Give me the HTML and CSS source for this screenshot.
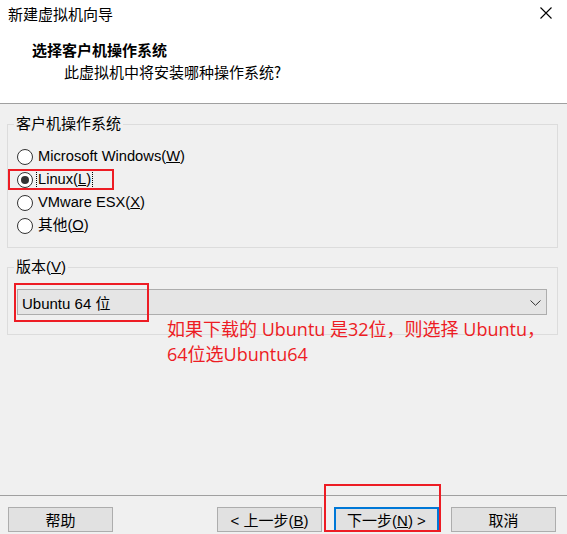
FILE: index.html
```html
<!DOCTYPE html>
<html lang="zh-CN">
<head>
<meta charset="utf-8">
<title>新建虚拟机向导</title>
<link rel="stylesheet" href="styles.css">
</head>
<body>
<div class="page">
  <div class="header">
    <div class="titlebar">
      <span class="title">新建虚拟机向导</span>
      <svg class="close" width="12" height="12" viewBox="0 0 12 12"><path d="M0.5 0.5 L11.5 11.5 M11.5 0.5 L0.5 11.5" stroke="#000" stroke-width="1.1" fill="none"/></svg>
    </div>
    <div class="heading">选择客户机操作系统</div>
    <div class="subtitle">此虚拟机中将安装哪种操作系统?</div>
  </div>

  <div class="content">
    <fieldset class="group">
      <legend>客户机操作系统</legend>
      <div class="radios">
        <div class="radio"><span class="dot"></span><span class="lbl">Microsoft Windows(<u>W</u>)</span></div>
        <div class="radio"><span class="dot checked"></span><span class="lbl focus">Linux(<u>L</u>)</span></div>
        <div class="radio"><span class="dot"></span><span class="lbl">VMware ESX(<u>X</u>)</span></div>
        <div class="radio"><span class="dot"></span><span class="lbl">其他(<u>O</u>)</span></div>
      </div>
    </fieldset>

    <fieldset class="group group2">
      <legend>版本(<u>V</u>)</legend>
      <div class="combo">
        <span class="combo-text">Ubuntu 64 位</span>
        <svg class="chev" width="11" height="6" viewBox="0 0 11 6"><polyline points="0.5,0.5 5.5,5.3 10.5,0.5" stroke="#333" stroke-width="1" fill="none"/></svg>
      </div>
    </fieldset>
  </div>

  <div class="footer">
    <button class="btn">帮助</button>
    <div class="btn-group">
      <button class="btn">&lt; 上一步(<u>B</u>)</button>
      <button class="btn primary">下一步(<u>N</u>) &gt;</button>
      <button class="btn">取消</button>
    </div>
  </div>

  <div class="mark mark-linux"></div>
  <div class="mark mark-combo"></div>
  <div class="mark mark-next"></div>
  <div class="note">如果下载的 Ubuntu 是32位，则选择 Ubuntu，<br>64位选Ubuntu64</div>
</div>
</body>
</html>
```

FILE: styles.css
```css
html, body {
  margin: 0;
  padding: 0;
  background: #f0f0f0;
}
.page {
  position: relative;
  width: 567px;
  height: 534px;
  overflow: hidden;
  display: flex;
  flex-direction: column;
  font-family: "Liberation Sans", "Noto Sans CJK SC", sans-serif;
  font-size: 15px;
  color: #000;
}
.header {
  background: #fff;
  height: 103px;
  border-bottom: 1px solid #a0a0a0;
}
.titlebar {
  height: 26px;
  display: flex;
  align-items: center;
  justify-content: space-between;
  padding: 0 15px 0 8px;
  font-family: "Noto Sans CJK SC", sans-serif;
  font-size: 15px;
}
.close { display: block; }
.heading {
  margin: 14px 0 0 32px;
  line-height: 20px;
  font-weight: bold;
  font-family: "Noto Sans CJK SC", sans-serif;
}
.subtitle {
  margin: 2px 0 0 64px;
  line-height: 20px;
  font-family: "Noto Sans CJK SC", sans-serif;
}
.content {
  padding: 0 9px 0 7px;
}
.group {
  margin: 11px 0 0;
  padding: 0 10px 10px 9px;
  border: 1px solid #dcdcdc;
  min-width: 0;
}
.group legend {
  margin-left: -3px;
  padding: 0 2px;
  line-height: 18px;
  font-size: 15px;
}
.radios {
  padding-top: 12px;
}
.radio {
  height: 23px;
  display: flex;
  align-items: center;
}
.dot {
  width: 14px;
  height: 14px;
  border: 1px solid #333;
  border-radius: 50%;
  background: #fff;
  margin-right: 5px;
  position: relative;
  flex: none;
}
.dot.checked::after {
  content: "";
  position: absolute;
  left: 3px;
  top: 3px;
  width: 8px;
  height: 8px;
  border-radius: 50%;
  background: #333;
}
.lbl {
  font-size: 14.7px;
  line-height: 17px;
  padding: 0 1px;
  margin-left: -1px;
}
.lbl.focus {
  outline: 1px dotted #000;
  outline-offset: 0;
}
.group2 {
  margin-top: 10px;
  padding: 13px 10px 19px 9px;
}
.combo {
  height: 24px;
  border: 1px solid #adadad;
  background: #e5e5e5;
  display: flex;
  align-items: center;
  justify-content: space-between;
  padding: 0 5px 0 4px;
}
.combo-text { font-size: 15px; }
.chev { display: block; margin-top: 1px; }
.footer {
  margin-top: auto;
  height: 39px;
  box-sizing: border-box;
  border-top: 1px solid #a0a0a0;
  padding: 11px 11px 0 8px;
  display: flex;
  align-items: flex-start;
  justify-content: space-between;
}
.btn-group {
  display: flex;
  gap: 12px;
}
.btn {
  width: 105px;
  height: 25px;
  box-sizing: border-box;
  border: 1px solid #adadad;
  background: #e1e1e1;
  font-family: "Liberation Sans", "Noto Sans CJK SC", sans-serif;
  font-size: 15px;
  color: #000;
  padding: 0;
  margin: 0;
}
.btn.primary {
  border: 2px solid #0078d7;
}
.mark {
  position: absolute;
  border: 2px solid #ed1c24;
  box-sizing: border-box;
}
.mark-linux { left: 8px; top: 169px; width: 106px; height: 21px; }
.mark-combo { left: 14px; top: 283px; width: 135px; height: 39px; }
.mark-next { left: 324px; top: 484px; width: 117px; height: 48px; }
.note {
  position: absolute;
  left: 167px;
  top: 317px;
  font-family: "Open Sans", "Noto Sans CJK SC", sans-serif;
  font-size: 18px;
  line-height: 25px;
  color: #ed1c24;
  white-space: nowrap;
}
```
